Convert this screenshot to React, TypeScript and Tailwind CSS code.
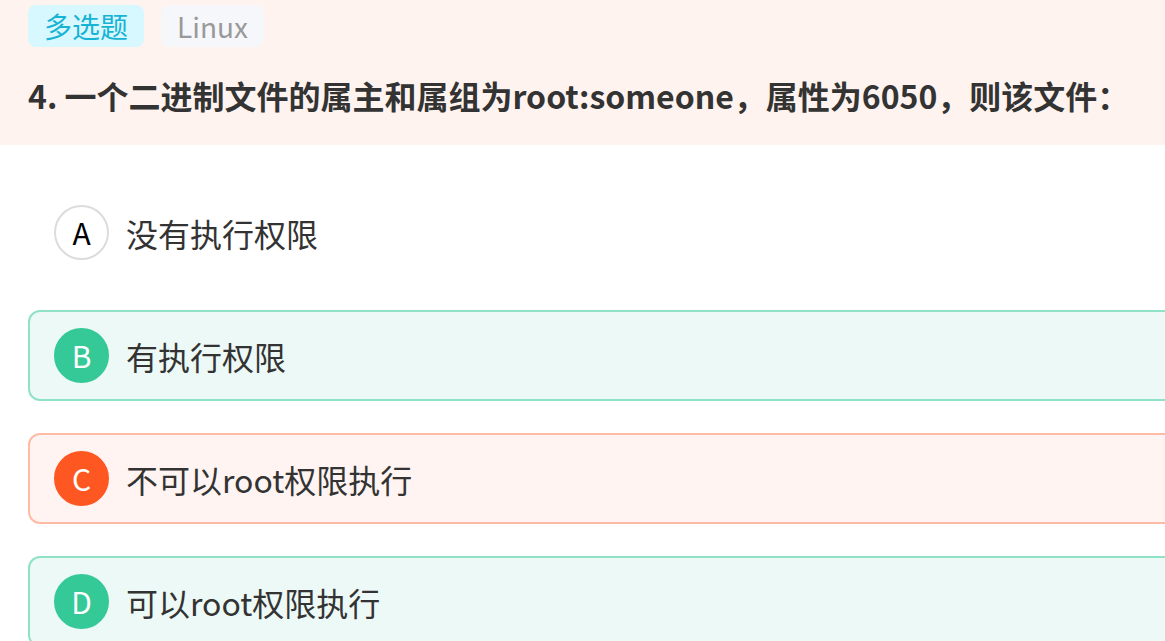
const options = [
  { key: "A", text: "没有执行权限", state: "none" },
  { key: "B", text: "有执行权限", state: "right" },
  { key: "C", text: "不可以root权限执行", state: "wrong" },
  { key: "D", text: "可以root权限执行", state: "right" },
]

function Option({ k, text, state }: { k: string; text: string; state: string }) {
  const card =
    state === "right"
      ? "border-[#90e2c6] bg-[#edf9f6]"
      : state === "wrong"
        ? "border-[#ffbba5] bg-[#fff4f1]"
        : "border-transparent bg-white"
  const dot =
    state === "right"
      ? "bg-[#34c997] text-white border-[#34c997]"
      : state === "wrong"
        ? "bg-[#ff5722] text-white border-[#ff5722]"
        : "bg-white text-black border-[#dcdcdc]"
  return (
    <div className={`flex items-center w-[1200px] h-[91px] border-2 rounded-[12px] pl-[24px] ${card}`}>
      <div className={`flex items-center justify-center w-[55px] h-[55px] rounded-full border-2 text-[30px] ${dot}`}>
        {k}
      </div>
      <span className="ml-[17px] text-[32px] text-[#333]">{text}</span>
    </div>
  )
}

export default function App() {
  return (
    <div
      className="w-[1165px] h-[641px] overflow-hidden bg-white"
      style={{ fontFamily: '"Noto Sans CJK SC", "Noto Sans", sans-serif' }}
    >
      <div className="h-[145px] bg-[#fff3ef] px-[28px] pt-[5px]">
        <div className="flex gap-[17px]">
          <span className="h-[42px] px-[16px] flex items-center rounded-[8px] bg-[#d7f8fe] text-[#17b3d4] text-[28px]">
            多选题
          </span>
          <span className="h-[42px] px-[16px] flex items-center rounded-[8px] bg-[#f5f7fa] text-[#999] text-[28px]">
            Linux
          </span>
        </div>
        <h1 className="mt-[28px] text-[32px] font-bold text-[#333] leading-[40px] whitespace-nowrap">
          4. 一个二进制文件的属主和属组为root:someone，属性为6050，则该文件：
        </h1>
      </div>
      <div className="flex flex-col gap-[32px] pl-[28px] pt-[42px]">
        {options.map((o) => (
          <Option key={o.key} k={o.key} text={o.text} state={o.state} />
        ))}
      </div>
    </div>
  )
}
